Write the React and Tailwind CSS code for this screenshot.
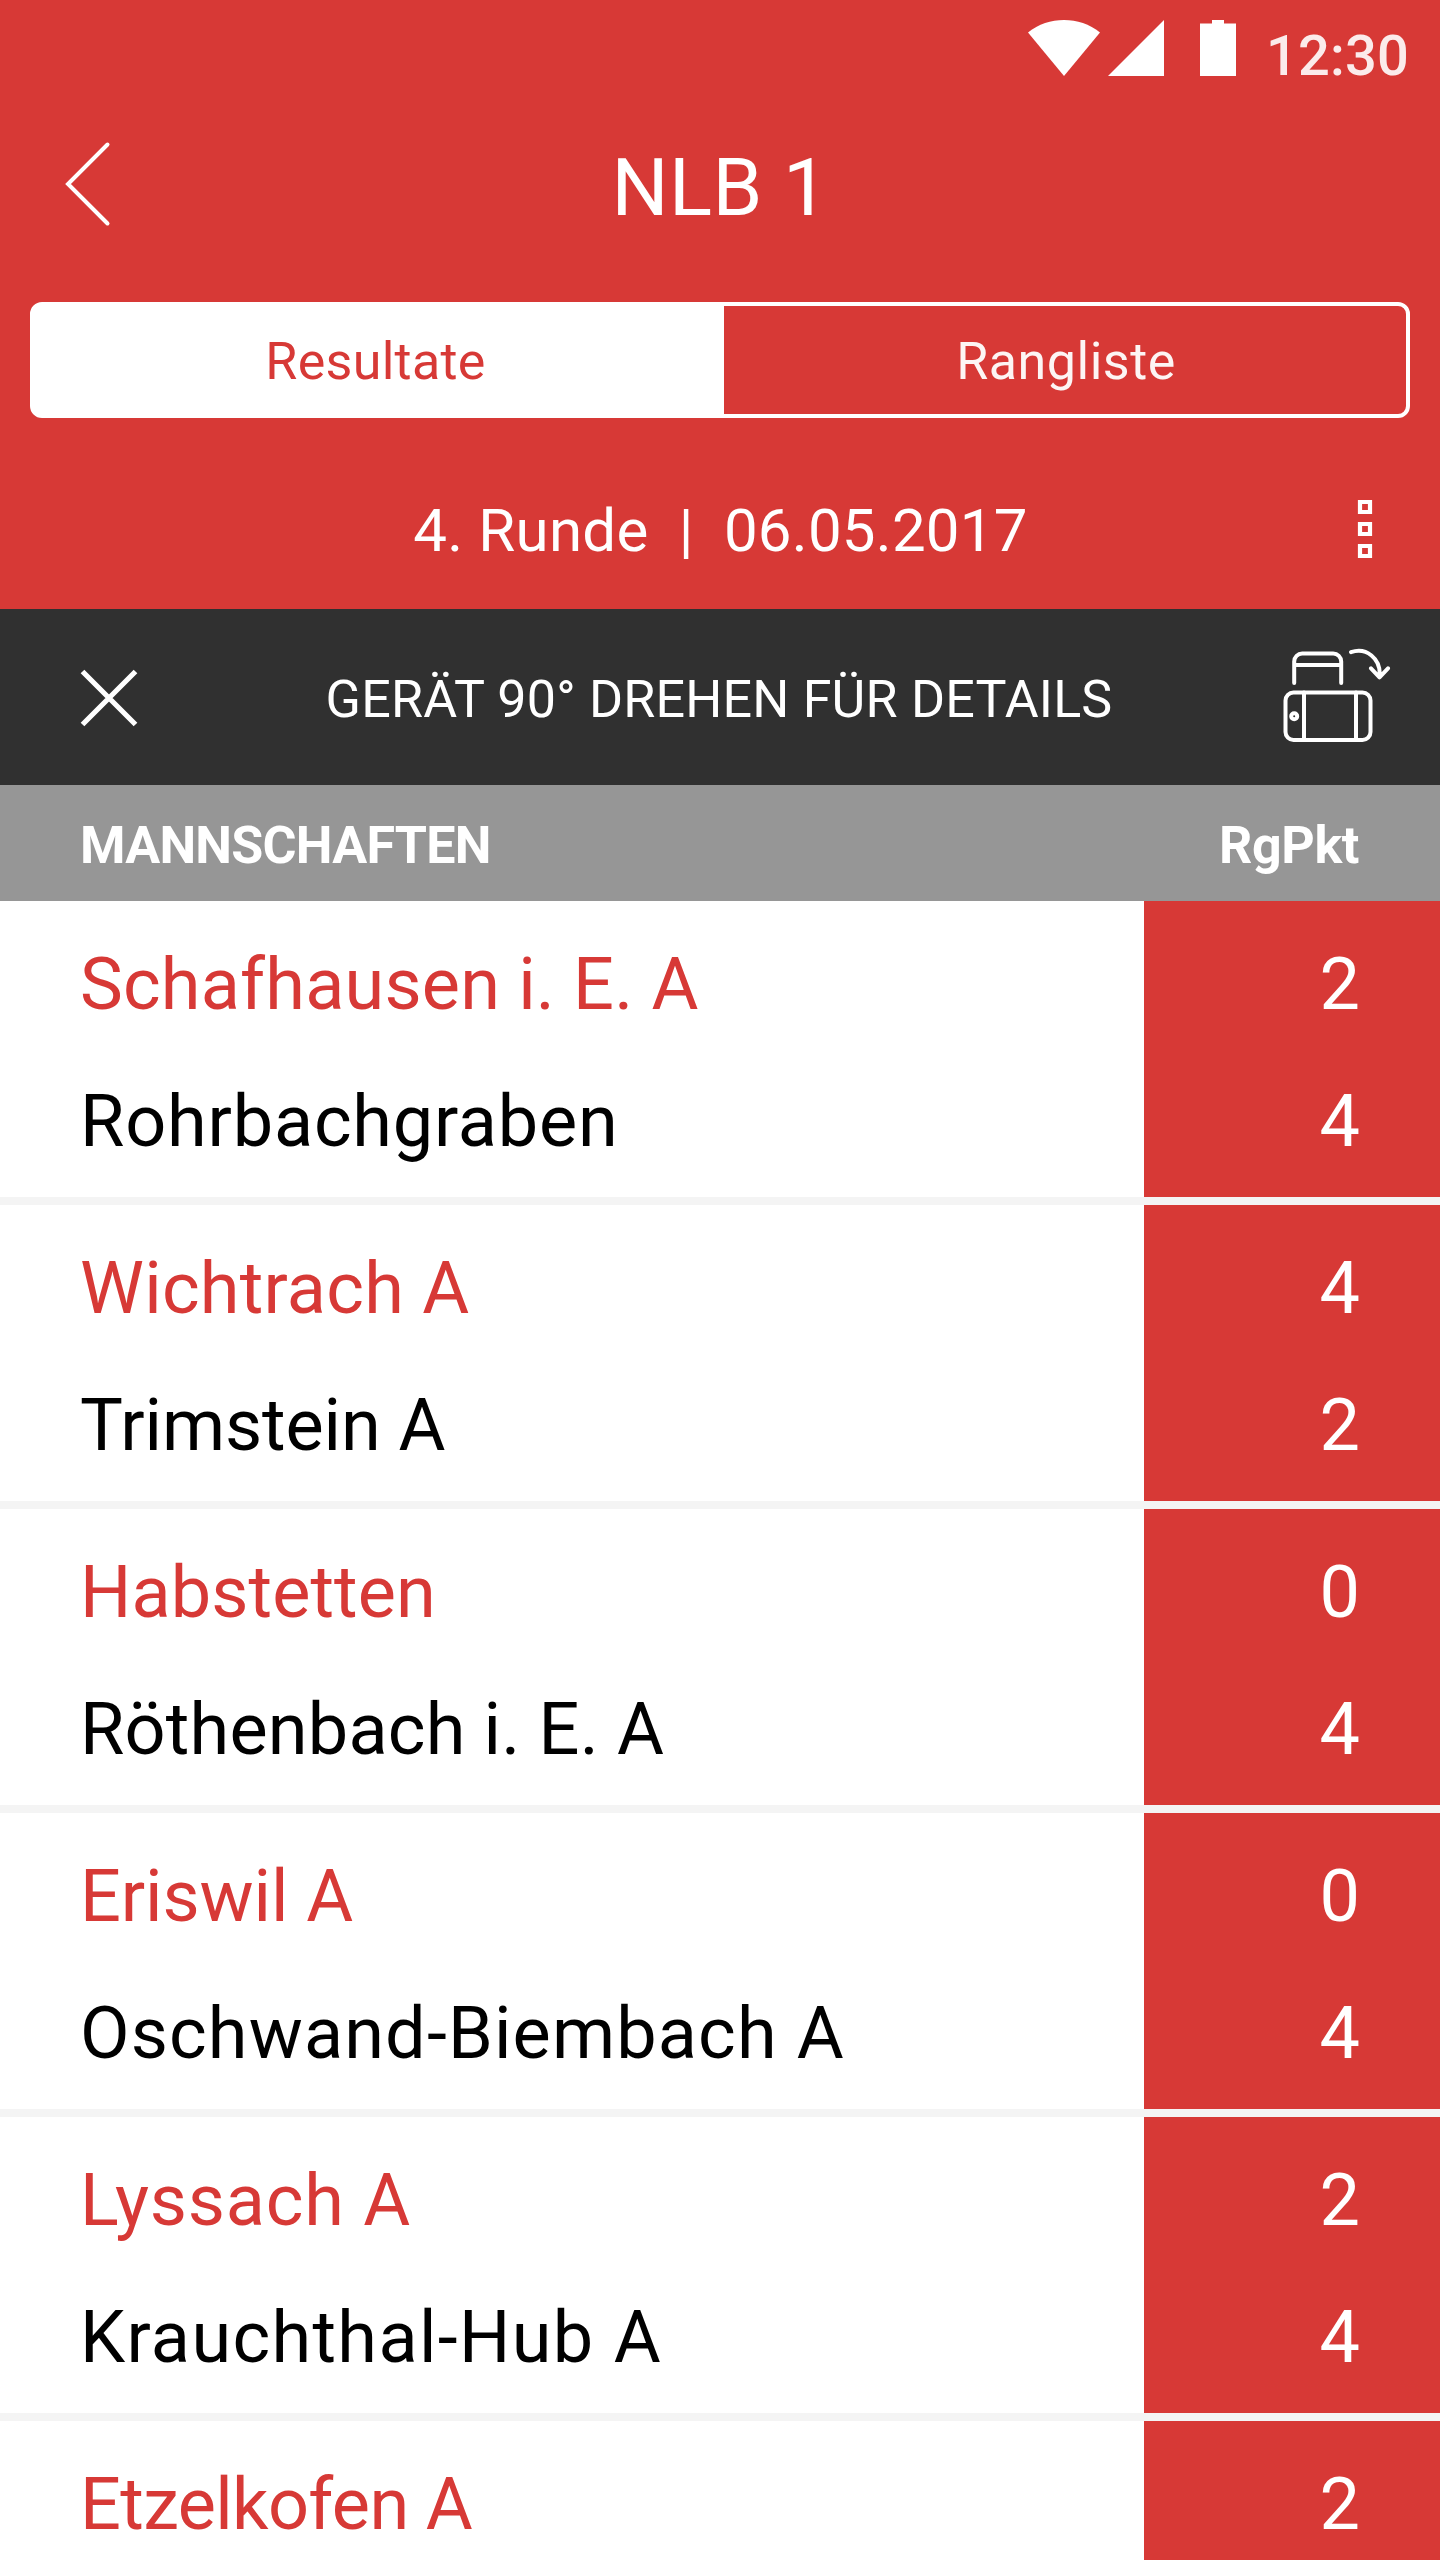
import { useState } from "react";

const MATCHES = [
  {
    home: { name: "Schafhausen i. E. A", points: 2, tracking: "tracking-[0.2px]" },
    away: { name: "Rohrbachgraben", points: 4, tracking: "tracking-[0.8px]" },
  },
  {
    home: { name: "Wichtrach A", points: 4, tracking: "tracking-[0.25px]" },
    away: { name: "Trimstein A", points: 2, tracking: "tracking-[-0.1px]" },
  },
  {
    home: { name: "Habstetten", points: 0, tracking: "tracking-[0.1px]" },
    away: { name: "Röthenbach i. E. A", points: 4, tracking: "tracking-[0.2px]" },
  },
  {
    home: { name: "Eriswil A", points: 0, tracking: "tracking-[-0.1px]" },
    away: { name: "Oschwand-Biembach A", points: 4, tracking: "tracking-[1.15px]" },
  },
  {
    home: { name: "Lyssach A", points: 2, tracking: "tracking-[0.8px]" },
    away: { name: "Krauchthal-Hub A", points: 4, tracking: "tracking-[1.35px]" },
  },
  {
    home: { name: "Etzelkofen A", points: 2, tracking: "tracking-[-0.65px]" },
  },
];

function StatusBar() {
  return (
    <div className="flex h-24 items-center justify-end pr-[32px] text-white">
      <svg className="h-14 w-[208px]" viewBox="0 0 208 56" fill="currentColor">
        {/* wifi */}
        <path d="M36 56 0 12.500C10.500 4 23 0 36 0s25.500 4 36 12.500Z" />
        {/* signal */}
        <path d="M136 0v56H80Z" />
        {/* battery */}
        <path d="M172 3.500h12V0h12v3.500h12V56h-36Z" />
      </svg>
      <span className="ml-[30px] w-[142px] pt-4 pr-px text-right text-[56px] leading-none font-medium tracking-[0.2px] text-white/90">
        12:30
      </span>
    </div>
  );
}

function TitleBar({ title }) {
  return (
    <div className="grid h-44 grid-cols-[200px_1fr_200px] items-center text-white">
      <button type="button" aria-label="Zurück" className="pl-16">
        <svg className="h-[88px] w-12" viewBox="0 0 48 88" fill="none" stroke="currentColor" strokeWidth="4" strokeLinecap="round">
          <path d="M43.500 4.500 4 44l39.500 39.500" />
        </svg>
      </button>
      <h1 className="pt-[7px] text-center text-[80px] leading-none tracking-[0.4px]">{title}</h1>
    </div>
  );
}

function RotateIcon() {
  return (
    <svg
      className="h-[100px] w-[110px]"
      viewBox="42 28 110 100"
      fill="none"
      stroke="currentColor"
      strokeWidth="4"
      strokeLinecap="round"
      strokeLinejoin="round"
    >
      <path d="M54.200 63V41.500a8 8 0 0 1 8-8h31a8 8 0 0 1 8 8V63M54.200 45h47" />
      <rect x="45.500" y="72.500" width="85" height="47.500" rx="8" />
      <path d="M64 72.500V120M116 72.500V120" />
      <circle cx="54.200" cy="96.300" r="3" />
      <path d="M111 32.200C126 27 141 38 139.700 56.500M131 48.300l8.500 9 8.500-9" />
    </svg>
  );
}

function MatchRow({ match }) {
  const { home, away } = match;

  return (
    <li className="flex h-[304px] shrink-0 border-b-8 border-[#f4f4f4] bg-white text-[72px] leading-[137px]">
      <div className="w-[1144px] pt-[15px] pl-20">
        <p className={`text-[#d73936] ${home.tracking}`}>{home.name}</p>
        {away && <p className={`text-black ${away.tracking}`}>{away.name}</p>}
      </div>
      <div className="flex-1 bg-[#d73936] pt-[15px] pr-20 text-right text-white">
        <p>{home.points}</p>
        {away && <p>{away.points}</p>}
      </div>
    </li>
  );
}

function App() {
  const [tab, setTab] = useState("Resultate");
  const [showHint, setShowHint] = useState(true);

  return (
    <div className="flex h-[2560px] w-[1440px] flex-col overflow-hidden bg-white font-['Roboto',sans-serif]">
      {/* Header */}
      <header className="h-[609px] shrink-0 bg-[#d73936]">
        <StatusBar />
        <TitleBar title="NLB 1" />

        <div className="mx-[30px] mt-[30px] flex h-[116px] rounded-xl border-4 border-white text-[52px] leading-none">
          {["Resultate", "Rangliste"].map((name) => (
            <button
              key={name}
              type="button"
              onClick={() => setTab(name)}
              className={`pt-1 first:w-[690px] first:pr-[7px] first:tracking-[0.3px] last:flex-1 last:pl-0.5 last:tracking-[0.5px] ${
                tab === name ? "bg-white text-[#d73936]" : "text-white/95"
              }`}
            >
              {name}
            </button>
          ))}
        </div>

        <div className="grid grid-cols-[200px_1fr_200px] items-center pt-[79px] text-white">
          <p className="col-start-2 pt-1 pl-px text-center text-[60px] leading-none tracking-[0.25px] whitespace-pre">
            {"4. Runde  |  06.05.2017"}
          </p>
          <button type="button" aria-label="Menü" className="flex justify-end pr-[67px]">
            <svg className="h-[60px] w-4" viewBox="0 0 16 60" fill="none" stroke="currentColor" strokeWidth="4.200">
              <path d="M3 3h10v10H3ZM3 25h10v10H3ZM3 47h10v10H3Z" />
            </svg>
          </button>
        </div>
      </header>

      {/* Rotate hint */}
      {showHint && (
        <div className="grid h-44 shrink-0 grid-cols-[200px_1fr_200px] items-center bg-[#303030] text-white">
          <button type="button" aria-label="Schliessen" onClick={() => setShowHint(false)} className="pt-px pl-20">
            <svg className="h-[58px] w-[58px]" viewBox="0 0 58 58" stroke="currentColor" strokeWidth="5.200">
              <path d="M2.500 2.500 55.500 55.500M55.500 2.500 2.500 55.500" />
            </svg>
          </button>
          <p className="pt-1.5 pr-0.5 text-center text-[52px] leading-none tracking-[0.2px]">GERÄT 90° DREHEN FÜR DETAILS</p>
          <div className="flex justify-end pt-0.5 pr-12">
            <RotateIcon />
          </div>
        </div>
      )}

      {/* Table head */}
      <div className="flex h-[116px] shrink-0 items-center justify-between bg-[#969696] px-20 pt-1.5 text-[52px] leading-none font-bold text-white">
        <span className="tracking-[-0.75px]">MANNSCHAFTEN</span>
        <span className="pr-px tracking-[-0.4px]">RgPkt</span>
      </div>

      <ul className="flex flex-col">
        {MATCHES.map((match) => (
          <MatchRow key={match.home.name} match={match} />
        ))}
      </ul>
    </div>
  );
}

export default App;
